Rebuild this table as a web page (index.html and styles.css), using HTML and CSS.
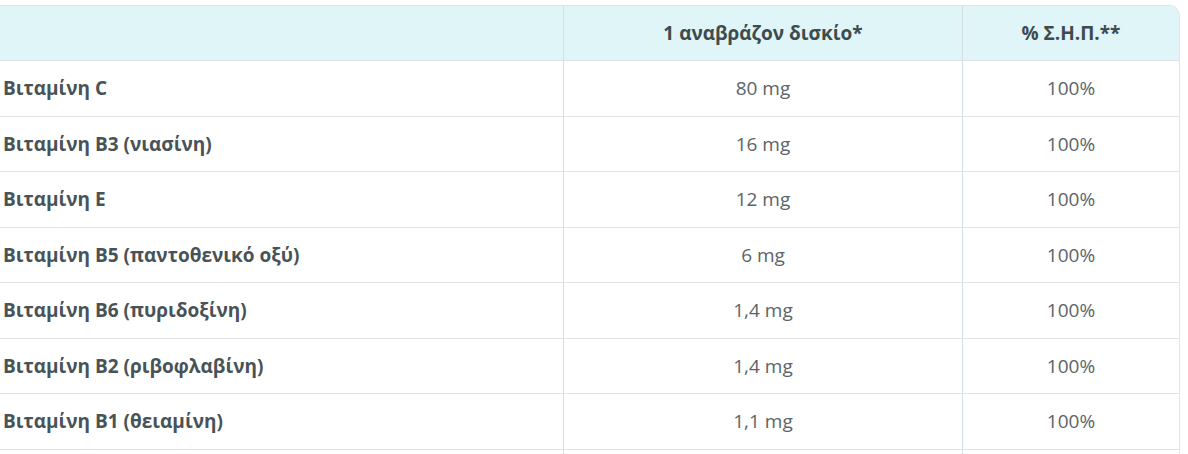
FILE: index.html
```html
<!DOCTYPE html>
<html lang="el">
<head>
<meta charset="utf-8">
<link rel="stylesheet" href="styles.css">
</head>
<body>
<div class="wrap">
<table class="nutri">
  <thead>
    <tr>
      <th class="c1"></th>
      <th class="c2">1 αναβράζον δισκίο*</th>
      <th class="c3">% Σ.Η.Π.**</th>
    </tr>
  </thead>
  <tbody>
    <tr><td class="c1">Βιταμίνη C</td><td class="c2">80 mg</td><td class="c3">100%</td></tr>
    <tr><td class="c1">Βιταμίνη B3 (νιασίνη)</td><td class="c2">16 mg</td><td class="c3">100%</td></tr>
    <tr><td class="c1">Βιταμίνη E</td><td class="c2">12 mg</td><td class="c3">100%</td></tr>
    <tr><td class="c1">Βιταμίνη B5 (παντοθενικό οξύ)</td><td class="c2">6 mg</td><td class="c3">100%</td></tr>
    <tr><td class="c1">Βιταμίνη B6 (πυριδοξίνη)</td><td class="c2">1,4 mg</td><td class="c3">100%</td></tr>
    <tr><td class="c1">Βιταμίνη B2 (ριβοφλαβίνη)</td><td class="c2">1,4 mg</td><td class="c3">100%</td></tr>
    <tr><td class="c1">Βιταμίνη B1 (θειαμίνη)</td><td class="c2">1,1 mg</td><td class="c3">100%</td></tr>
    <tr class="tail"><td class="c1"></td><td class="c2"></td><td class="c3"></td></tr>
  </tbody>
</table>
</div>
</body>
</html>
```

FILE: styles.css
```css
html, body {
  margin: 0;
  padding: 0;
  background: #ffffff;
}
body {
  font-family: "Open Sans", "Noto Sans", sans-serif;
  overflow: hidden;
}
.wrap {
  padding-top: 5px;
  width: 1180px;
}
.nutri {
  width: 1180px;
  border-collapse: separate;
  border-spacing: 0;
  table-layout: fixed;
  border-top: 1px solid #dfe4e6;
  border-right: 1px solid #dfe4e6;
  border-top-right-radius: 11px;
  overflow: hidden;
}
.nutri th,
.nutri td {
  box-sizing: border-box;
  height: 55.5px;
  padding: 0;
  font-size: 19px;
  border-bottom: 1px solid #dfe4e6;
  vertical-align: middle;
}
.nutri thead th {
  height: 55px;
  background: #dff5f7;
  color: #3d4b4e;
  font-weight: 700;
  text-align: center;
  border-bottom: 1px solid #dde3e5;
}
.nutri .c1 {
  width: 563px;
  text-align: left;
  padding-left: 3px;
  font-weight: 700;
  color: #485358;
}
.nutri .c2 {
  width: 399px;
  text-align: center;
  border-left: 1px solid #d3dfe4;
}
.nutri .c3 {
  text-align: center;
  border-left: 1px solid #d3dfe4;
}
.nutri td.c2,
.nutri td.c3 {
  color: #5b6468;
}
.nutri thead th.c2,
.nutri thead th.c3 {
  color: #3d4b4e;
}
```
